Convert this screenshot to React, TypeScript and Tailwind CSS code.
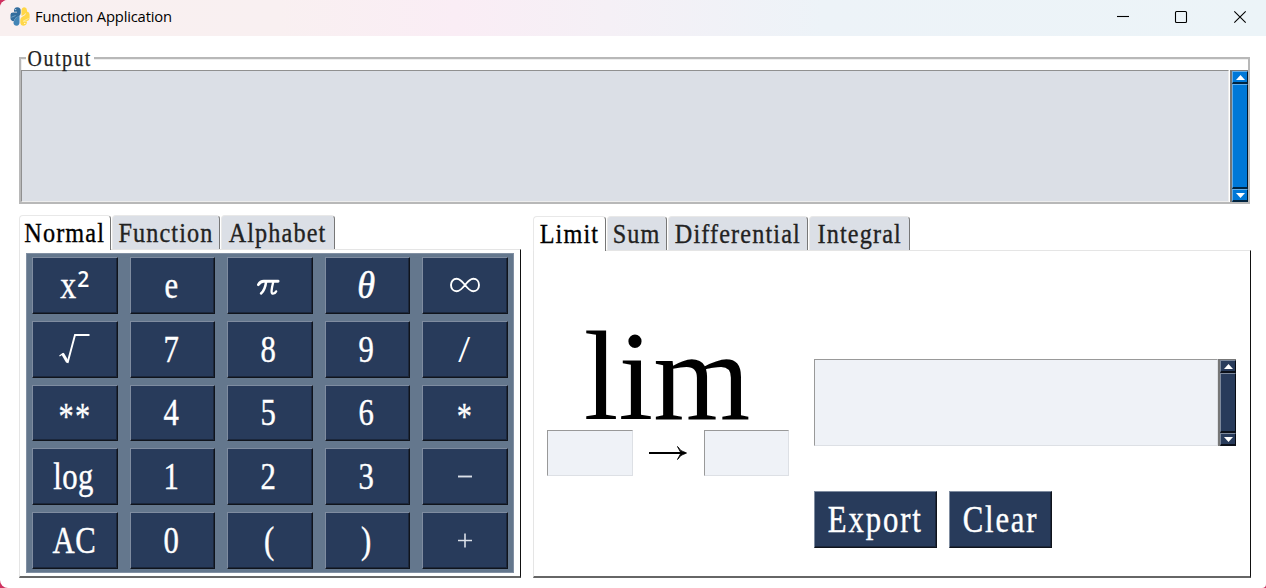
import type { ReactNode } from "react";

const serif = "font-['Liberation_Serif','DejaVu_Serif',serif]";

function Label({ className, children }: { className: string; children: ReactNode }) {
  return (
    <span className={`${serif} inline-block shrink-0 whitespace-nowrap leading-none ${className}`}>{children}</span>
  );
}

function PythonLogo() {
  return (
    <svg className="ml-[10px] h-5 w-5 shrink-0 translate-y-px" viewBox="0 0 20 20" fill="none" strokeLinejoin="round">
      <path d="M4 3.4Q4.4 .4 7.2 .3Q10.8 .4 10.7 3.6V6Q10.6 8.3 8.7 9.2L5.8 10.8Q4.7 11.5 4.5 13V14.2Q.8 14.2 .5 11.4V7.5Q.6 5.6 3 5.5H7V4.7H4Z" fill="#336d9d" />
      <path d="M4.5 13.2Q4.8 11.2 6.5 10.2L9.5 8.6V15.5Q9.4 18.5 6.7 18.7Q3.8 18.6 3.4 15.8Z" fill="#4285b6" />
      <path d="M1.3 10.3L5.6 8.5" stroke="#8db4d1" strokeWidth=".7" />
      <path d="M11.5 3.6Q11.6 .5 14.3 .3Q16.8 .5 17 3.3V4.6Q19.5 5 19.6 7.4V10.5Q19.5 13.6 16.9 14V15.6Q16.6 18.6 13.8 18.7Q10.4 18.5 10.3 15.4V12.8Q10.5 10.8 12.2 9.8L14.8 8.3Q15.8 7.5 15.8 5.8Q14.8 8 11.5 9Z" fill="#ffd748" />
      <path d="M13 14.2H17M13.5 13.9L18.7 11.5" stroke="#fff0a8" strokeWidth=".8" />
      <circle cx="5.7" cy="2.6" r=".6" fill="#dce8f1" />
      <circle cx="14.8" cy="16.4" r=".6" fill="#fff" />
    </svg>
  );
}

function TitleBar() {
  return (
    <header className="flex h-9 shrink-0 items-center bg-[linear-gradient(90deg,#f9f0f0_0%,#f9f0f1_22%,#faedf5_36%,#f5f0f6_48%,#edf3f8_65%,#ecf4f8_100%)] pb-1">
      <PythonLogo />
      <span className="ml-[5px] w-[300px] origin-left scale-x-[0.985] whitespace-nowrap font-['Open_Sans','Noto_Sans',sans-serif] text-[15px] leading-5 tracking-[-0.2px] text-black">
        Function Application
      </span>
      <svg className="ml-auto h-[34px] w-[166px]" viewBox="0 0 166 34" fill="none" stroke="#000" strokeWidth="1.1">
        <path d="M17 17.5H29" />
        <rect x="75.5" y="12.5" width="11" height="11" rx="1" />
        <path d="M134.3 12.3L145.7 23.7M145.7 12.3L134.3 23.7" />
      </svg>
    </header>
  );
}

function Arrow({ down }: { down?: boolean }) {
  return (
    <svg className="h-[5px] w-[9px]" viewBox="0 0 9 5">
      <path d={down ? "M0 0H9L4.5 5Z" : "M0 5H9L4.5 0Z"} fill="#fff" />
    </svg>
  );
}

function ScrollBar({ tone }: { tone: string }) {
  const part = `flex items-center justify-center border-t border-l border-r border-b-2 border-t-white/40 border-l-white/40 border-r-black/80 border-b-black/70 ${tone}`;
  return (
    <div className="flex w-[18px] shrink-0 flex-col border-t border-l-2 border-[#777]">
      <div className={`${part} h-[13px]`}><Arrow /></div>
      <div className={`${part} flex-1`} />
      <div className={`${part} h-[13px]`}><Arrow down /></div>
    </div>
  );
}

function Tab({ label, className, active }: { label: string; className: string; active?: boolean }) {
  return (
    <div
      className={`flex items-start justify-center rounded-t-[4px] border-t border-l border-r border-t-[#e8e8e8] border-l-[#e8e8e8] border-r-[#777] pt-[3px] ${
        active ? "bg-white text-black" : "h-[34px] bg-[#dbdfe6] text-[#222]"
      } ${className}`}
    >
      <Label className="scale-x-[0.865] text-[28px] tracking-[1.3px] [-webkit-text-stroke:0.35px_currentColor]">{label}</Label>
    </div>
  );
}

const bevel = "border border-t-[#7f8ca0] border-l-[#7f8ca0] border-r-[#10141c] border-b-[#10141c] bg-[#283b5b] text-white shadow-[inset_-1px_-1px_0_#1b273c]";

const glyphs: Record<string, ReactNode> = {
  "π": (
    <svg className="h-[17px] w-[23px] -translate-x-px translate-y-[2px]" viewBox="0 0 24 17" fill="none" stroke="#fff" strokeLinecap="round">
      <path d="M1.5 5.5Q3.5 2 7 2H22" strokeWidth="3" />
      <path d="M9.5 2.5Q8.5 11 4.2 14.8" strokeWidth="2.6" />
      <path d="M17 2.5Q14 14.5 16 14.8Q18.5 15.3 20 12.5" strokeWidth="2.4" />
    </svg>
  ),
  "∞": (
    <svg className="h-[16px] w-[32px]" viewBox="0 0 32 16" fill="none" stroke="#fff" strokeWidth="1.9">
      <path d="M16 8C12.5 3.5 10.5 1.8 7.7 1.8C4.2 1.8 2 4.5 2 8C2 11.5 4.2 14.2 7.7 14.2C10.5 14.2 12.5 12.5 16 8C19.5 3.5 21.5 1.8 24.3 1.8C27.8 1.8 30 4.5 30 8C30 11.5 27.8 14.2 24.3 14.2C21.5 14.2 19.5 12.5 16 8Z" />
    </svg>
  ),
  "√": (
    <svg className="h-8 w-8 -translate-x-px" viewBox="0 0 32 32" fill="none" stroke="#fff">
      <path d="M1.5 23L5 20.5" strokeWidth="1.2" />
      <path d="M4.5 20.5L9.5 29" strokeWidth="3" />
      <path d="M9.5 30L17 2H31.5" strokeWidth="1.9" />
    </svg>
  ),
  "−": (
    <svg className="h-4 w-4" viewBox="0 0 16 16" stroke="#dbe0e8" strokeWidth="1.9"><path d="M1 7.5H15" /></svg>
  ),
  "+": (
    <svg className="h-4 w-4" viewBox="0 0 16 16" stroke="#dbe0e8" strokeWidth="1.6"><path d="M1 7.5H15M8 .5V14.5" /></svg>
  ),
  "*": <Label className="-translate-x-px translate-y-[4px] scale-x-[0.82] text-[37px] [-webkit-text-stroke:0.3px_white]">*</Label>,
  "**": <Label className="translate-y-[4px] scale-x-[0.82] text-[37px] tracking-[1.5px] [-webkit-text-stroke:0.3px_white]">**</Label>,
  "/": <Label className="-translate-x-px scale-x-[1.15] text-[37px]">/</Label>,
  "θ": <Label className="-translate-x-px scale-x-[0.98] text-[37px] italic [-webkit-text-stroke:0.5px_white]">θ</Label>,
  "x²": (
    <span className="flex -translate-x-[2px] items-center">
      <Label className="ml-[2px] scale-x-[0.86] text-[37px] [-webkit-text-stroke:0.4px_white]">x</Label>
      <span className="-mt-[11px] font-['Open_Sans',sans-serif] text-[21px] leading-none font-semibold">2</span>
    </span>
  ),
};

const keys = [
  "x²", "e", "π", "θ", "∞",
  "√", "7", "8", "9", "/",
  "**", "4", "5", "6", "*",
  "log", "1", "2", "3", "−",
  "AC", "0", "(", ")", "+",
];

function Key({ name }: { name: string }) {
  return (
    <button className={`${bevel} flex items-center justify-center`}>
      {glyphs[name] ?? (
        <Label className="-translate-x-px scale-x-[0.83] text-[37px] tracking-[0.6px] [-webkit-text-stroke:0.4px_white]">{name}</Label>
      )}
    </button>
  );
}

const sunken = "border border-t-[#999] border-l-[#999] border-r-[#dde0e5] border-b-[#dde0e5] bg-[#eff2f7]";
const panel = "border border-t-[#e5e5e5] border-l-[#e5e5e5] border-r-[#111] border-b-2 border-b-[#666]";

export default function App() {
  return (
    <div className="h-[588px] w-[1266px] overflow-hidden bg-[#cf3160]">
      <div className="flex h-full flex-col overflow-hidden rounded-l-[8px] rounded-br-[4px] bg-white">
        <TitleBar />
        <section className="mt-[21px] ml-[19px] flex h-[147px] w-[1231px] shrink-0 flex-col border-2 border-[#b8b8b8] shadow-[inset_1px_1px_0_#eee]">
          <div className="flex h-[11px] items-center">
            <div className="ml-[5px] flex h-[18px] w-[68px] -translate-y-[5px] items-center justify-center bg-white">
              <Label className="z-10 -translate-y-[2px] scale-x-[0.83] text-[24px] tracking-[1.8px] text-[#222] [-webkit-text-stroke:0.25px_currentColor]">Output</Label>
            </div>
          </div>
          <div className="flex flex-1">
            <div className="mr-px flex-1 border border-t-[#909090] border-l-[#909090] border-r-[#eee] border-b-[#eee] bg-[#dbdfe6]" />
            <ScrollBar tone="bg-[#0078d7]" />
          </div>
        </section>
        <main className="flex flex-1 pl-[19px]">
          <section className="mt-[11px] flex h-[363px] w-[502px] flex-col">
            <div className="flex h-[34px] gap-px">
              <Tab label="Normal" className="z-10 h-[35px] w-[92px]" active />
              <Tab label="Function" className="w-[108px]" />
              <Tab label="Alphabet" className="w-[114px]" />
            </div>
            <div className={`${panel} flex-1 pt-[3px] pl-[6px]`}>
              <div className="grid h-[320px] w-[488px] grid-cols-5 grid-rows-5 gap-x-[11.6px] gap-y-[7px] border border-[#8290a3] bg-[#64778d] px-[5px] py-[3px]">
                {keys.map((key) => <Key key={key} name={key} />)}
              </div>
            </div>
          </section>
          <section className="mt-[12px] ml-[12px] flex h-[362px] w-[718px] flex-col">
            <div className="flex h-[34px] gap-px">
              <Tab label="Limit" className="z-10 h-[35px] w-[73px]" active />
              <Tab label="Sum" className="w-[60px]" />
              <Tab label="Differential" className="w-[140px]" />
              <Tab label="Integral" className="w-[101px]" />
            </div>
            <div className={`${panel} flex flex-1 pl-[13px]`}>
              <div className="w-[242px] pt-[69px]">
                <div className="flex h-[110px] items-center justify-center">
                  <Label className="-translate-x-px translate-y-[2px] scale-x-[0.99] text-[126px] text-black">lim</Label>
                </div>
                <div className="flex items-center justify-between">
                  <div className={`${sunken} h-[46px] w-[86px]`} />
                  <svg className="h-4 w-[38px] -translate-x-px" viewBox="0 0 38 16" fill="none" stroke="#000">
                    <path d="M0 8H36" strokeWidth="2" />
                    <path d="M28.5 1.5Q31 6.5 37.5 8Q31 9.5 28.5 14.5L32 8Z" fill="#000" strokeWidth=".9" />
                  </svg>
                  <div className={`${sunken} h-[46px] w-[85px]`} />
                </div>
              </div>
              <div className="ml-[25px] flex w-[422px] flex-col pt-[108px]">
                <div className="flex h-[87px]">
                  <div className={`${sunken} flex-1`} />
                  <ScrollBar tone="bg-[#283b5b]" />
                </div>
                <div className="mt-[45px] flex gap-3">
                  <button className={`${bevel} flex h-[57px] w-[123px] items-center justify-center`}>
                    <Label className="scale-x-[0.83] text-[37px] tracking-[2.3px] [-webkit-text-stroke:0.4px_white]">Export</Label>
                  </button>
                  <button className={`${bevel} flex h-[57px] w-[103px] items-center justify-center`}>
                    <Label className="scale-x-[0.83] text-[37px] tracking-[2.2px] [-webkit-text-stroke:0.4px_white]">Clear</Label>
                  </button>
                </div>
              </div>
            </div>
          </section>
        </main>
      </div>
    </div>
  );
}
